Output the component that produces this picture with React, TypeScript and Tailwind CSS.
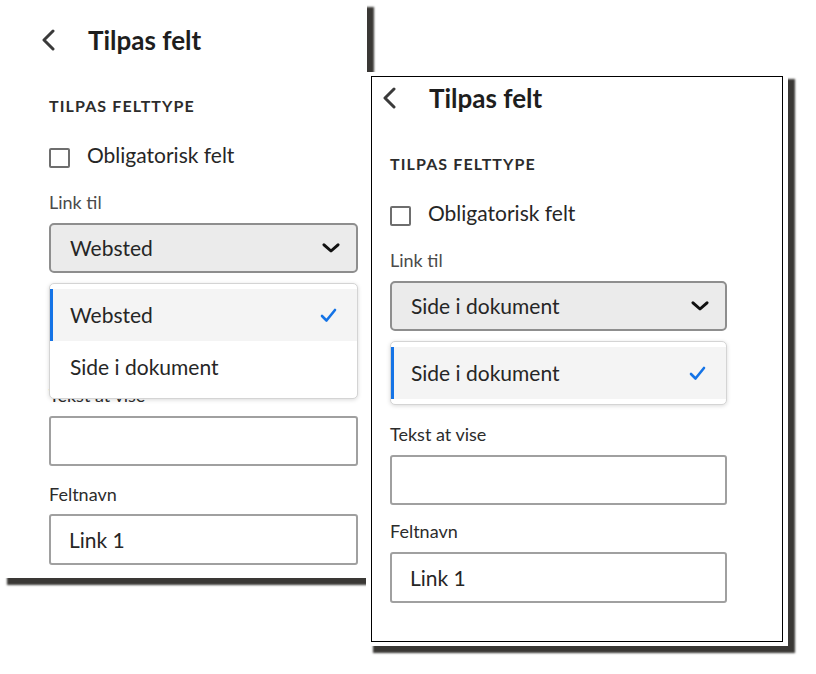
import * as React from 'react';

interface PanelBodyProps {
  selected: string;
  options: string[];
  width: number;
  padTop: string;
  gapAfterSelect: string;
  gapBeforeName: string;
  gapAfterName: string;
}

function BackChevron() {
  return (
    <svg width="16" height="22" viewBox="0 0 16 22" fill="none" className="shrink-0">
      <path d="M13 2 L4 11 L13 20" stroke="#3a3a3a" strokeWidth="3" strokeLinecap="round" strokeLinejoin="round" />
    </svg>
  );
}

function DownChevron() {
  return (
    <svg width="18" height="10" viewBox="0 0 18 10" fill="none">
      <path d="M2 1.8 L9 8 L16 1.8" stroke="#111" strokeWidth="3" strokeLinecap="round" strokeLinejoin="round" />
    </svg>
  );
}

function Check() {
  return (
    <svg width="17" height="15" viewBox="0 0 17 15" fill="none">
      <path d="M2 8 L6.5 12.5 L15 2" stroke="#1473e6" strokeWidth="2.6" strokeLinecap="round" strokeLinejoin="round" />
    </svg>
  );
}

function PanelBody({ selected, options, width, padTop, gapAfterSelect, gapBeforeName, gapAfterName }: PanelBodyProps) {
  return (
    <div className={`flex flex-col ${padTop}`} style={{ width }}>
      <div className="flex items-center h-[30px] -ml-[9px]">
        <BackChevron />
        <span className="ml-[32px] text-[26px] leading-[30px] font-bold text-[#1e1e1e]">Tilpas felt</span>
      </div>

      <span className="mt-[42px] text-[16px] leading-[18px] font-bold tracking-[1.1px] text-[#2c2c2c]">TILPAS FELTTYPE</span>

      <div className="mt-[27px] flex items-start h-[26px]">
        <div className="mt-[6px] w-[21px] h-[20px] border-2 border-[#6e6e6e] rounded-[2px] bg-white" />
        <span className="ml-[17px] text-[21px] leading-[26px] text-[#262626]">Obligatorisk felt</span>
      </div>

      <span className="mt-[23px] text-[18px] leading-[22px] text-[#4b4b4b]">Link til</span>

      <div className="relative mt-[10px]">
        <div className="h-[50px] flex items-center justify-between pl-[19px] pr-[16px] bg-[#ebebeb] border-2 border-[#8e8e8e] rounded-[5px]">
          <span className="text-[21px] text-[#262626]">{selected}</span>
          <DownChevron />
        </div>

        <div className="absolute left-0 right-0 top-[calc(100%+10px)] z-10 bg-white border border-[#d4d4d4] rounded-[5px] py-[5px] shadow-[0_1px_4px_rgba(0,0,0,0.15)]">
          {options.map((opt) => {
            const active = opt === selected;
            return (
              <div
                key={opt}
                className={`relative h-[52px] flex items-center justify-between pl-[20px] pr-[20px] ${active ? 'bg-[#f4f4f4]' : 'bg-white'}`}
              >
                {active && <div className="absolute left-0 top-0 bottom-0 w-[3px] bg-[#1473e6]" />}
                <span className="text-[21px] text-[#262626]">{opt}</span>
                {active && <Check />}
              </div>
            );
          })}
        </div>
      </div>

      <span className={`${gapAfterSelect} text-[18px] leading-[22px] text-[#2c2c2c]`}>Tekst at vise</span>
      <div className="mt-[10px] h-[50px] border-2 border-[#a0a0a0] rounded-[3px] bg-white" />

      <span className={`${gapBeforeName} text-[18px] leading-[22px] text-[#2c2c2c]`}>Feltnavn</span>
      <div className={`${gapAfterName} h-[51px] flex items-center pl-[18px] border-2 border-[#a0a0a0] rounded-[3px] bg-white`}>
        <span className="text-[21px] text-[#262626]">Link 1</span>
      </div>
    </div>
  );
}

export default function App() {
  return (
    <div className="relative w-[816px] h-[674px] bg-white overflow-hidden font-[Lato,sans-serif]">
      {/* back window */}
      <div className="absolute left-0 top-0 w-[367px] h-[578px] bg-white pl-[49px] shadow-[7px_7px_2px_#3a3835]">
        <PanelBody
          selected="Websted"
          options={['Websted', 'Side i dokument']}
          width={309}
          padTop="pt-[25px]"
          gapAfterSelect="mt-[111px]"
          gapBeforeName="mt-[17px]"
          gapAfterName="mt-[9px]"
        />
      </div>

      {/* front window */}
      <div className="absolute left-[366px] top-[72px] w-[422px] h-[574px] bg-white px-[5px] py-[4px] shadow-[7px_7px_2px_#3a3835]">
        <div className="h-full border border-black pl-[18px]">
          <PanelBody
            selected="Side i dokument"
            options={['Side i dokument']}
            width={337}
            padTop="pt-[6px]"
            gapAfterSelect="mt-[92px]"
            gapBeforeName="mt-[15px]"
            gapAfterName="mt-[10px]"
          />
        </div>
      </div>
    </div>
  );
}
